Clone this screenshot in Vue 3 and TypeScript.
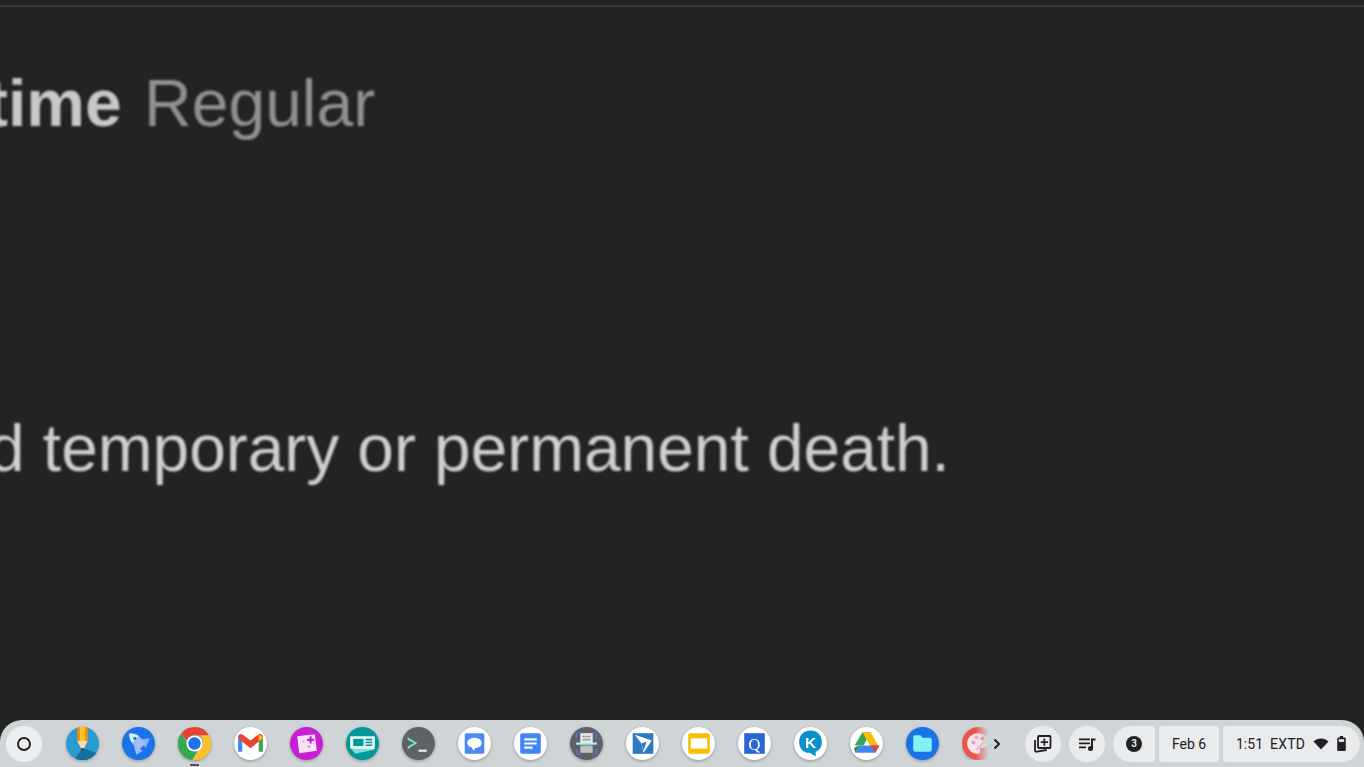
<template>
  <div class="screen">
    <main class="page">
      <div class="rule"></div>
      <p class="heading"><b>time</b> <span>Regular</span></p>
      <p class="body">d temporary or permanent death.</p>
    </main>

    <footer class="shelf">
      <button class="launcher"><span class="ring"></span></button>

      <div class="apps">
        <!-- pencil -->
        <svg class="app" viewBox="0 0 32 32">
          <circle cx="16" cy="16" r="16" fill="#2a9bd0" />
          <path d="M16 20 29.500 25A16 16 0 0 1 9 30.500Z" fill="#14719f" />
          <path d="M11 0h10v14H11z" fill="#f59300" />
          <path d="M13.500 0h5v14h-5z" fill="#fbc02d" />
          <path d="M11 13.500h10L16 24z" fill="#f5dcb4" />
          <path d="M14.400 20.500h3.200L16 24z" fill="#1f2933" />
        </svg>
        <!-- rocket -->
        <svg class="app" viewBox="0 0 32 32">
          <circle cx="16" cy="16" r="16" fill="#1a73e8" />
          <path d="M17 12 27 11 23 20z" fill="#8ab4f8" />
          <path d="M11 17 14 27 20 23z" fill="#a3b4f2" />
          <path d="M7 6.500c4.500-.5 8 1 10.500 3.500l5 6.500-5.500 5-6.500-5C8 14 7 10 7 6.500z" fill="#a8bdf6" />
          <path d="M7 6.500c3.500-.4 6.500.5 9.500 2.500L9.500 15C8 12.500 7 10 7 6.500z" fill="#d8f4fb" />
          <circle cx="12.500" cy="11" r="1.600" fill="#1a73e8" />
        </svg>
        <!-- chrome -->
        <svg class="app" viewBox="0 0 32 32">
          <path d="M16 0a16 16 0 0 1 13.900 8H16a8 8 0 0 0-7.500 5.200L3.300 6.200A16 16 0 0 1 16 0z" fill="#ea4335" />
          <path d="M3.300 6.200 10 18a8 8 0 0 0 8 5.800L14 32A16 16 0 0 1 3.300 6.200z" fill="#34a853" />
          <path d="M29.900 8A16 16 0 0 1 14 32l7-11.500A8 8 0 0 0 21.500 8z" fill="#fbc02d" />
          <circle cx="16" cy="16" r="7.800" fill="#fff" />
          <circle cx="16" cy="16" r="6" fill="#1a73e8" />
        </svg>
        <!-- gmail -->
        <svg class="app" viewBox="0 0 32 32">
          <circle cx="16" cy="16" r="16" fill="#fff" />
          <path d="M4 11v13h4V13z" fill="#4285f4" />
          <path d="M24 13v11h4V11z" fill="#34a853" />
          <path d="M4 9.500C4 7 7 6 8.500 7.500L16 13l7.500-5.500C25 6 28 7 28 9.500V11l-12 9.500L4 11z" fill="#ea4335" />
          <path d="M24 7.500 28 9.500V11l-4 3z" fill="#fbbc04" />
        </svg>
        <!-- sparkle card -->
        <svg class="app" viewBox="0 0 32 32">
          <circle cx="16" cy="16" r="16" fill="#c81fd6" />
          <path d="M7 9 24 7 26 23 9 25.500z" fill="#f7e4f8" />
          <path d="M19 9h2v2.500h2.500v2H21V16h-2v-2.500h-2.500v-2H19z" fill="#c81fd6" />
          <circle cx="18.500" cy="19" r="1.300" fill="#e58aec" />
          <circle cx="13" cy="14" r="1" fill="#e58aec" />
        </svg>
        <!-- news card -->
        <svg class="app" viewBox="0 0 32 32">
          <circle cx="16" cy="16" r="16" fill="#00989b" />
          <path d="M5 21 27 17v5L9 26z" fill="#7fdcd6" />
          <path d="M5 9h22a1 1 0 0 1 1 1v10a1 1 0 0 1-1 1H5a1 1 0 0 1-1-1V10a1 1 0 0 1 1-1z" fill="#e8f7f6" />
          <path d="M7 11.500h10v7H7z" fill="#00989b" />
          <path d="M19 11.500h6.500V13H19zM19 14.300h6.500v1.500H19zM19 17h6.500v1.500H19z" fill="#00989b" />
        </svg>
        <!-- terminal -->
        <svg class="app" viewBox="0 0 32 32">
          <circle cx="16" cy="16" r="16" fill="#5f6368" />
          <path d="M5.500 10 15 15.500 5.500 21.500v-2.700l6-3.300-6-3z" fill="#6ee7b0" />
          <path d="M16 22h8v2h-8z" fill="#f1f3f4" />
        </svg>
        <!-- chat -->
        <svg class="app" viewBox="0 0 32 32">
          <circle cx="16" cy="16" r="16" fill="#fff" />
          <rect x="6.500" y="6" width="19" height="20" rx="1.500" fill="#4a8af4" />
          <path d="M16 10.500c4 0 7 2.200 7 5s-3 5-6.500 5l-1.500 2.500-1.500-3.200c-2.500-.5-4.500-2-4.500-4.300 0-2.800 3-5 7-5z" fill="#fff" />
        </svg>
        <!-- docs -->
        <svg class="app" viewBox="0 0 32 32">
          <circle cx="16" cy="16" r="16" fill="#fff" />
          <rect x="6" y="6" width="20" height="20" rx="2" fill="#4285f4" />
          <path d="M10 11h12v2H10zM10 15h12v2H10zM10 19h8v2h-8z" fill="#fff" />
        </svg>
        <!-- scanner -->
        <svg class="app" viewBox="0 0 32 32">
          <circle cx="16" cy="16" r="16" fill="#5f6368" />
          <path d="M10 6h12v10H10z" fill="#e8eaed" />
          <path d="M12 8.500h8v1.500h-8zM12 11.500h8V13h-8z" fill="#9aa0a6" />
          <path d="M10 18h12v7H10z" fill="#bdc1c6" />
          <path d="M6 15h20v2.200H6z" fill="#a5f3f0" />
          <path d="M7 11V7a1 1 0 0 1 1-1h2V5H8a2 2 0 0 0-2 2v4zM25 11V7a1 1 0 0 0-1-1h-2V5h2a2 2 0 0 1 2 2v4zM7 21v4a1 1 0 0 0 1 1h2v1H8a2 2 0 0 1-2-2v-4zM25 21v4a1 1 0 0 1-1 1h-2v1h2a2 2 0 0 0 2-2v-4z" fill="#4285f4" />
        </svg>
        <!-- paper plane -->
        <svg class="app" viewBox="0 0 32 32">
          <circle cx="16" cy="16" r="16" fill="#fff" />
          <rect x="6.500" y="6" width="20" height="20" fill="#2f78c4" />
          <path d="M8.500 7.500 25 13 17 25 15 16z" fill="#fff" />
          <path d="M15 16 20 14 17 23z" fill="#2f78c4" />
        </svg>
        <!-- slides -->
        <svg class="app" viewBox="0 0 32 32">
          <circle cx="16" cy="16" r="16" fill="#fff" />
          <rect x="6" y="6" width="21" height="20" rx="2" fill="#fbbc04" />
          <rect x="8.500" y="11" width="16" height="10" fill="#fff" />
        </svg>
        <!-- Q -->
        <svg class="app" viewBox="0 0 32 32">
          <circle cx="16" cy="16" r="16" fill="#fff" />
          <rect x="6" y="6" width="20" height="20" fill="#2b66d9" />
          <text x="16" y="22" text-anchor="middle" class="glyph-q">Q</text>
        </svg>
        <!-- K bubble -->
        <svg class="app" viewBox="0 0 32 32">
          <circle cx="16" cy="16" r="16" fill="#fff" />
          <path d="M16 3.500c6.500 0 11 4.500 11 11 0 5-2.500 8-6 9.500v4.500l-5.500-3.500C9.500 25.500 5 21 5 14.500 5 8 9.500 3.500 16 3.500z" fill="#0b8fce" />
          <text x="16" y="20" text-anchor="middle" class="glyph-k">K</text>
        </svg>
        <!-- drive -->
        <svg class="app" viewBox="0 0 32 32">
          <circle cx="16" cy="16" r="16" fill="#fff" />
          <path d="M12 5h8L13 18H4.500z" fill="#34a853" />
          <path d="M12 5h8l8.500 15h-8z" fill="#fbbc04" />
          <path d="M9 18h19.500l-4 7H5z" fill="#4285f4" />
          <path d="M20.500 18h8l-4 7z" fill="#ea4335" />
          <path d="M4 20 9 18l-4 7z" fill="#1e8e3e" />
        </svg>
        <!-- files -->
        <svg class="app" viewBox="0 0 32 32">
          <circle cx="16" cy="16" r="16" fill="#1a73e8" />
          <path d="M7 10a2 2 0 0 1 2-2h5l2 2.500h7a2 2 0 0 1 2 2V22a2 2 0 0 1-2 2H9a2 2 0 0 1-2-2z" fill="#84f0f6" />
        </svg>
        <!-- palette, fades out under the overflow arrow -->
        <svg class="app faded" viewBox="0 0 32 32">
          <circle cx="16" cy="16" r="16" fill="#e8574c" />
          <path d="M15 6c6 0 11 4 11 9 0 3-2 5-5 5h-2c-1 0-2 1-1.500 2s.5 4-2.500 4C9 26 5 21 5 16S9 6 15 6z" fill="#fbe4e6" />
          <circle cx="11" cy="15" r="2" fill="#ef9ad6" />
          <circle cx="14" cy="10" r="1.800" fill="#ef9ad6" />
          <circle cx="20" cy="11" r="1.800" fill="#e8574c" />
          <path d="M14 22 23 13" stroke="#ef9ad6" stroke-width="1.500" />
        </svg>
      </div>

      <svg class="chevron" viewBox="0 0 10 12">
        <path d="M2.500 1.500 7 6 2.500 10.500" fill="none" stroke="#202124" stroke-width="2" />
      </svg>

      <div class="tray">
        <button class="tray-btn">
          <svg viewBox="0 0 20 20" width="20" height="20">
            <path d="M6 2h10.500a1 1 0 0 1 1 1v10a1 1 0 0 1-1 1H6a1 1 0 0 1-1-1V3a1 1 0 0 1 1-1z" fill="none" stroke="#202124" stroke-width="1.800" />
            <path d="M10.500 4.500h1.700v2.800H15V9h-2.800v2.800h-1.700V9H7.700V7.300h2.800z" fill="#202124" />
            <path d="M2 6v10.200c0 1 .8 1.700 1.700 1.500l10-1.700" fill="none" stroke="#202124" stroke-width="1.800" />
          </svg>
        </button>
        <button class="tray-btn">
          <svg viewBox="0 0 20 20" width="20" height="20">
            <path d="M2 4.500h11v1.700H2zM2 8.500h11v1.700H2zM2 12.500h7v1.700H2zM14 4.500h4.500v2H16V14h-2z" fill="#202124" />
            <circle cx="13.500" cy="14.500" r="2.500" fill="#202124" />
          </svg>
        </button>
        <div class="pod pod-notify"><span class="count">3</span></div>
        <div class="pod pod-date">Feb 6</div>
        <div class="pod pod-status">
          <span class="clock">1:51</span>
          <span class="extd">EXTD</span>
          <svg class="wifi" viewBox="0 0 16 14" width="16" height="14">
            <path d="M8 12.500 .5 4.500C2.500 2.500 5 1.500 8 1.500s5.500 1 7.500 3z" fill="#202124" />
          </svg>
          <svg viewBox="1 1 8 14" width="9" height="15">
            <path d="M3.500 1h3v1.500H8a1 1 0 0 1 1 1V14a1 1 0 0 1-1 1H2a1 1 0 0 1-1-1V3.500a1 1 0 0 1 1-1h1.500z" fill="#202124" />
            <path d="M2.500 4h5v2.500h-5z" fill="#e8eaed" />
          </svg>
        </div>
      </div>
    </footer>
  </div>
</template>

<script setup lang="ts">
</script>

<style>
html,
body {
  margin: 0;
  background: #232323;
  overflow: hidden;
}
</style>

<style scoped>
.screen {
  width: 1364px;
  height: 767px;
  display: flex;
  flex-direction: column;
  background: #232323;
  overflow: hidden;
  font-family: "Liberation Sans", Arial, sans-serif;
}

.page {
  flex: 1;
  min-height: 0;
  overflow: hidden;
}

.rule {
  height: 2px;
  margin-top: 5px;
  background: #363636;
}

.heading,
.body {
  margin: 0;
  white-space: nowrap;
  filter: blur(1px);
  line-height: 75px;
}

.heading {
  font-size: 66px;
  padding-top: 59px;
  margin-left: -14px;
  color: #909090;
}

.heading b {
  color: #c8c8c8;
  margin-right: 4px;
}

.body {
  font-size: 65.800px;
  margin-top: 270px;
  margin-left: -12px;
  color: #cfcfcf;
}

.shelf {
  height: 47px;
  flex: none;
  display: flex;
  align-items: center;
  padding: 0 4px 0 6px;
  background: #cfd4d6;
  border-radius: 22px 22px 0 0;
  box-sizing: border-box;
}

button {
  border: none;
  padding: 0;
  cursor: pointer;
}

.launcher {
  width: 36px;
  height: 36px;
  border-radius: 50%;
  background: #eceef0;
  display: flex;
  align-items: center;
  justify-content: center;
  flex: none;
}

.ring {
  width: 10px;
  height: 10px;
  border: 2px solid #202124;
  border-radius: 50%;
}

.apps {
  display: flex;
  align-items: center;
  gap: 23px;
  margin-left: 23.500px;
  flex: none;
  position: relative;
}

.apps::after {
  content: "";
  position: absolute;
  left: 124px;
  top: 37px;
  width: 9px;
  height: 2px;
  background: #5b4a63;
}

.app {
  width: 33px;
  height: 33px;
  flex: none;
  filter: drop-shadow(0 1px 1.500px rgba(0, 0, 0, 0.3));
}

.faded {
  margin-right: -8px;
  -webkit-mask-image: linear-gradient(to right, #000 40%, transparent 80%);
  mask-image: linear-gradient(to right, #000 40%, transparent 80%);
}

.glyph-q {
  font: 16px "Liberation Serif", serif;
  fill: #fff;
}

.glyph-k {
  font: bold 15px "Liberation Sans", sans-serif;
  fill: #fff;
}

.chevron {
  width: 10px;
  height: 12px;
  margin-left: 5.500px;
  flex: none;
}

.tray {
  margin-left: auto;
  display: flex;
  align-items: center;
  gap: 4px;
}

.tray-btn {
  width: 36px;
  height: 36px;
  margin-right: 4px;
  border-radius: 50%;
  background: #e9ebed;
  display: flex;
  align-items: center;
  justify-content: center;
}

.pod {
  height: 36px;
  background: #e9ebed;
  display: flex;
  align-items: center;
  justify-content: center;
  font-family: Roboto, sans-serif;
  font-size: 14px;
  color: #202124;
  box-sizing: border-box;
}

.pod-notify {
  width: 42px;
  border-radius: 18px 4px 4px 18px;
}

.count {
  width: 16px;
  height: 16px;
  border-radius: 50%;
  background: #202124;
  color: #fff;
  font-size: 10px;
  font-weight: 500;
  display: flex;
  align-items: center;
  justify-content: center;
}

.pod-date {
  width: 60px;
  border-radius: 4px;
}

.pod-status {
  width: 137px;
  border-radius: 4px 18px 18px 4px;
  justify-content: flex-start;
  padding-left: 13px;
}

.extd {
  margin-left: 7px;
  letter-spacing: 0.2px;
}

.wifi {
  margin-left: 8px;
  margin-right: 8px;
}
</style>
